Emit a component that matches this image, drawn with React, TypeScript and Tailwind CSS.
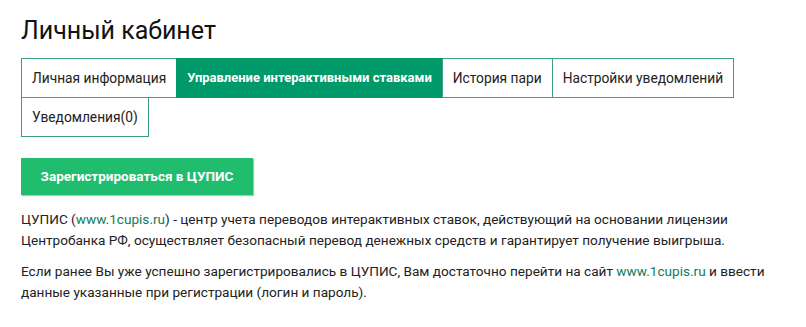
import React, { useState } from 'react';

const tabs = [
    'Личная информация',
    'Управление интерактивными ставками',
    'История пари',
    'Настройки уведомлений',
    'Уведомления(0)',
];

export default function App() {
    const [active, setActive] = useState(1);

    return (
        <div className="min-h-screen bg-white text-[#222] font-['Roboto',sans-serif] pl-[21px] pr-[20px] pt-[15px]">
            <h1 className="text-[25px] leading-[31px] font-normal text-[#111]">Личный кабинет</h1>

            <div className="mt-[12px] flex flex-wrap pl-px pt-px">
                {tabs.map((t, i) => (
                    <button
                        key={t}
                        onClick={() => setActive(i)}
                        className={
                            i === active
                                ? '-ml-px -mt-px border border-[#00996a] bg-[#00996a] px-[10px] py-[9px] text-[13px] leading-[20px] font-bold text-white'
                                : '-ml-px -mt-px border border-[#3f9f81] bg-white px-[10px] py-[9px] text-[13.75px] leading-[20px] text-[#222]'
                        }
                    >
                        {t}
                    </button>
                ))}
            </div>

            <button className="mt-[21px] h-[37px] w-[232px] bg-[#21bd6e] text-[13.5px] font-bold text-white shadow-[1px_1px_1px_rgba(0,0,0,0.25)]">
                Зарегистрироваться в ЦУПИС
            </button>

            <div className="mt-[14px] max-w-[765px] space-y-[10px] text-[13.6px] leading-[21px]">
                <p>
                    ЦУПИС (<a className="text-[#0e7c5c]">www.1cupis.ru</a>) - центр учета переводов интерактивных ставок, действующий на основании лицензии Центробанка РФ, осуществляет безопасный перевод денежных средств и гарантирует получение выигрыша.
                </p>
                <p>
                    Если ранее Вы уже успешно зарегистрировались в ЦУПИС, Вам достаточно перейти на сайт <a className="text-[#0e7c5c]">www.1cupis.ru</a> и ввести данные указанные при регистрации (логин и пароль).
                </p>
            </div>
        </div>
    );
}
